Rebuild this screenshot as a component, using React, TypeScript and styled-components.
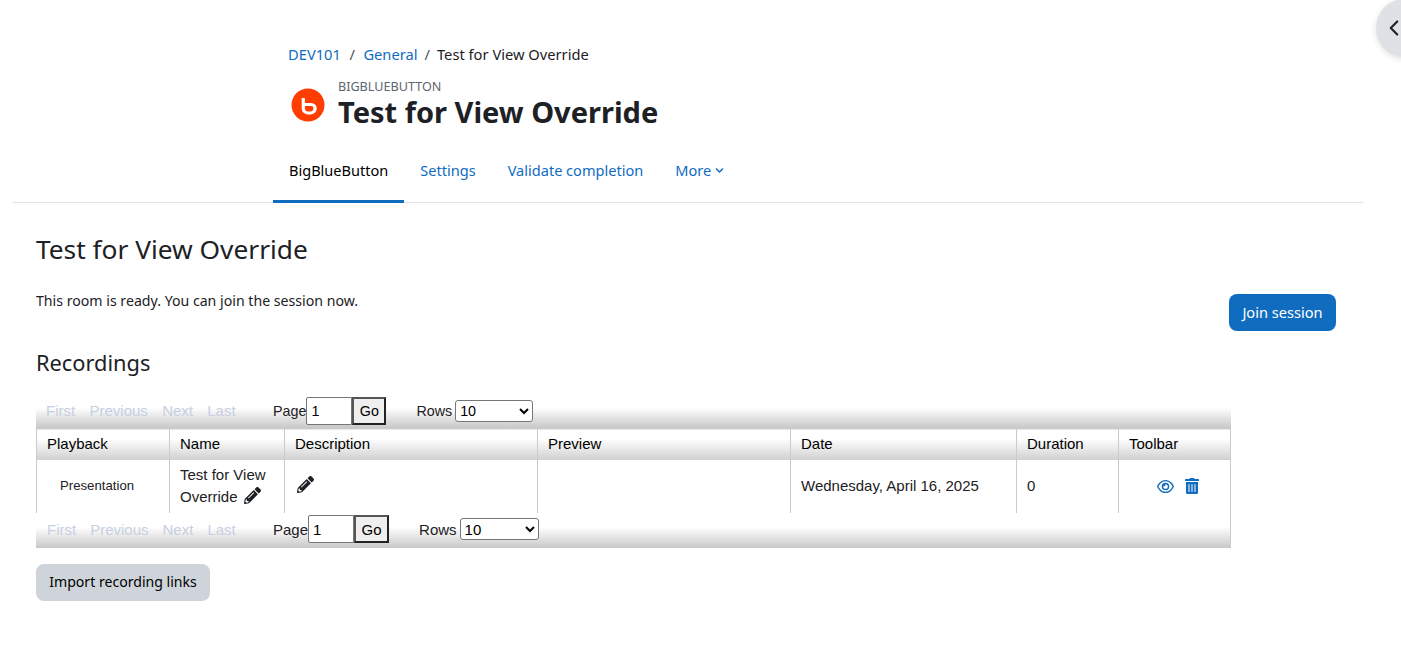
import styled, { createGlobalStyle } from "styled-components";
import { FaPencilAlt, FaTrashAlt, FaChevronDown } from "react-icons/fa";
import { FaRegEye } from "react-icons/fa6";
import { FiChevronLeft } from "react-icons/fi";

const GlobalStyle = createGlobalStyle`
	html, body {
		margin: 0;
		padding: 0;
		background: #fff;
		color: #1d2125;
		font-family: "Noto Sans", sans-serif;
		font-size: 15px;
	}
	a {
		color: #0f6cbf;
		text-decoration: none;
	}
`;

const Page = styled.div`
	position: relative;
	width: 1401px;
	height: 661px;
	overflow: hidden;
	padding-left: 13px;
	box-sizing: border-box;
`;

const DrawerToggle = styled.div`
	position: absolute;
	top: -1px;
	left: 1376px;
	width: 56px;
	height: 58px;
	border-radius: 50%;
	background: #dee2e6;
	box-shadow: 0 2px 6px rgba(0, 0, 0, 0.12);
	display: flex;
	align-items: center;
	padding-left: 5px;
	box-sizing: border-box;
	font-size: 26px;
	color: #1d2125;
`;

const Header = styled.header`
	width: 1350px;
	padding: 43px 0 0 275px;
	box-sizing: border-box;
`;

const Breadcrumb = styled.nav`
	display: flex;
	align-items: center;
	height: 21px;
	font-size: 14.7px;
`;

const Crumb = styled.span`
	white-space: nowrap;
`;

const Slash = styled.span<{ $tight?: boolean }>`
	padding: 0 ${(props) => (props.$tight ? "7px" : "8.5px")};
	color: #495057;
`;

const TitleRow = styled.div`
	display: flex;
	align-items: center;
	margin-top: 16px;
	padding-left: 3px;
	gap: 13px;
`;

const ActivityLabel = styled.div`
	font-size: 12.6px;
	line-height: 14px;
	color: #5c6670;
`;

const PageTitle = styled.h1`
	margin: 0;
	font-size: 29px;
	line-height: 36px;
	font-weight: 700;
	white-space: nowrap;
`;

const Tabs = styled.nav`
	display: flex;
	height: 64px;
	margin-top: 9px;
	margin-left: -15px;
	box-sizing: border-box;
`;

const Tab = styled.a<{ $active?: boolean }>`
	display: flex;
	align-items: center;
	gap: 4px;
	padding: 1px 16px 0;
	font-size: 14.55px;
	white-space: nowrap;
	color: ${(props) => (props.$active ? "#000" : "#0f6cbf")};
	border-bottom: 3px solid ${(props) => (props.$active ? "#0f6cbf" : "transparent")};
`;

const Content = styled.main`
	width: 1350px;
	border-top: 1px solid #dee2e6;
	margin-top: -1px;
	padding: 0 27px 0 23px;
	box-sizing: border-box;
`;

const RoomTitle = styled.h2`
	margin: 30px 0 0;
	font-size: 26.3px;
	line-height: 32px;
	font-weight: 400;
	white-space: nowrap;
`;

const JoinRow = styled.div`
	display: flex;
	justify-content: space-between;
	align-items: flex-start;
	margin-top: 17px;
	font-size: 14.15px;
`;

const RoomStatus = styled.p`
	margin: 8px 0 0;
	line-height: 21px;
`;

const PrimaryButton = styled.button`
	margin-top: 12px;
	width: 107px;
	height: 37px;
	padding: 0 0 2px;
	border: none;
	border-radius: 8px;
	background: #0f6cbf;
	color: #fff;
	font: inherit;
	font-size: 14.6px;
`;

const SectionTitle = styled.h3`
	margin: 16px 0 0;
	font-size: 21.8px;
	line-height: 32px;
	font-weight: 400;
`;

const RecordingsBox = styled.div`
	width: 1195px;
	margin-top: 15px;
	font-family: "Liberation Sans", Arial, sans-serif;
	font-size: 15px;
	border-right: 1px solid #cbcbcb;
	border-left: 1px solid #cbcbcb;
	box-sizing: border-box;
`;

const Paginator = styled.div<{ $bottom?: boolean }>`
	display: flex;
	align-items: center;
	height: ${(props) => (props.$bottom ? "35px" : "34px")};
	padding-bottom: ${(props) => (props.$bottom ? "2px" : "0")};
	margin-left: -1px;
	margin-right: ${(props) => (props.$bottom ? "0" : "-1px")};
	box-sizing: border-box;
	background: linear-gradient(#fff 0%, #fff 40%, #c8c8c8 100%);
	font-size: ${(props) => (props.$bottom ? "15px" : "14.3px")};
`;

const PagerLinks = styled.div<{ $bottom?: boolean }>`
	display: flex;
	gap: ${(props) => (props.$bottom ? "14px" : "14.3px")};
	width: 237px;
	padding-left: ${(props) => (props.$bottom ? "11px" : "10px")};
	padding-bottom: ${(props) => (props.$bottom ? "0" : "2px")};
	box-sizing: border-box;
	font-size: 15px;
	color: #c6d0e2;
`;

const PageField = styled.input`
	width: 46px;
	height: 28px;
	box-sizing: border-box;
	padding: 1px 4px;
	border: 1px solid #767676;
	border-radius: 2px 0 0 2px;
	font: inherit;
	background: #fff;
`;

const GoButton = styled.button<{ $bottom?: boolean }>`
	width: ${(props) => (props.$bottom ? "35px" : "34px")};
	height: 28px;
	padding: 0;
	border: 2px solid;
	border-color: #555 #222 #222 #555;
	background: #efefef;
	font: inherit;
	color: #000;
`;

const RowsSelect = styled.select<{ $bottom?: boolean }>`
	width: ${(props) => (props.$bottom ? "79px" : "78px")};
	height: 22px;
	margin-left: 3px;
	font: inherit;
	background: #fff;
	border-radius: 3px;
	border: 1px solid #767676;
`;

const RowsLabel = styled.span`
	margin-left: 30px;
`;

const Grid = styled.table`
	width: 100%;
	border-collapse: collapse;
	table-layout: fixed;
	border-top: 1px solid #cbcbcb;
`;

const HeadCell = styled.th<{ $width: number }>`
	width: ${(props) => props.$width}px;
	height: 31px;
	padding: 0 10px 2px 10.5px;
	box-sizing: border-box;
	text-align: left;
	font-weight: 400;
	color: #000;
	background: linear-gradient(#fff 0%, #fff 30%, #cfcfcf 100%);
	border-left: 1px solid #cbcbcb;
	&:first-child {
		border-left: none;
		padding-left: 10px;
	}
`;

const Cell = styled.td`
	height: 53px;
	padding: 0 10px 0 10.5px;
	box-sizing: border-box;
	vertical-align: middle;
	border-left: 1px solid #cbcbcb;
	line-height: 22px;
	&:first-child {
		border-left: none;
	}
`;

const PlaybackCell = styled(Cell)`
	padding-left: 23px;
	font-size: 13.2px;
`;

const ToolbarIcons = styled.div`
	display: flex;
	justify-content: center;
	align-items: center;
	gap: 10px;
	color: #0f6cbf;
	padding-left: 7.5px;
`;

const EyeIcon = styled(FaRegEye)`
	font-size: 17px;
`;

const TrashIcon = styled(FaTrashAlt)`
	font-size: 16px;
`;

const EditIcon = styled.span`
	display: inline-flex;
	vertical-align: -2px;
	margin-left: 2px;
	font-size: 17px;
`;

const SecondaryButton = styled.button`
	display: block;
	width: 174px;
	height: 37px;
	margin-top: 16px;
	padding: 0 0 2px;
	border: none;
	border-radius: 8px;
	background: #ced4da;
	color: #000;
	font-family: "Noto Sans", sans-serif;
	font-size: 14.1px;
`;

function BbbLogo() {
	return (
		<svg width="34" height="34" viewBox="0 0 34 34">
			<circle cx="17" cy="17" r="16.5" fill="#ff3d00" />
			<path
				d="M12.3 10V20.5a4.5 4.5 0 0 0 4.5 4.5h2.8a4.5 4.5 0 0 0 4.5 -4.5a4 4 0 0 0 -4 -4h-7.8"
				fill="none"
				stroke="#fff"
				strokeWidth="3.2"
			/>
		</svg>
	);
}

function Pager({ bottom }: { bottom?: boolean }) {
	return (
		<Paginator $bottom={bottom}>
			<PagerLinks $bottom={bottom}>
				<span>First</span>
				<span>Previous</span>
				<span>Next</span>
				<span>Last</span>
			</PagerLinks>
			<span>Page</span>
			<PageField defaultValue="1" />
			<GoButton $bottom={bottom}>Go</GoButton>
			<RowsLabel>Rows</RowsLabel>
			<RowsSelect $bottom={bottom} defaultValue="10">
				<option>10</option>
			</RowsSelect>
		</Paginator>
	);
}

export default function App() {
	const columns = [
		{ title: "Playback", width: 132 },
		{ title: "Name", width: 115 },
		{ title: "Description", width: 253 },
		{ title: "Preview", width: 253 },
		{ title: "Date", width: 226 },
		{ title: "Duration", width: 102 },
		{ title: "Toolbar", width: 112 },
	];
	return (
		<>
			<GlobalStyle />
			<Page>
				<DrawerToggle>
					<FiChevronLeft />
				</DrawerToggle>
				<Header>
					<Breadcrumb>
						<Crumb>
							<a href="#">DEV101</a>
						</Crumb>
						<Slash>/</Slash>
						<Crumb>
							<a href="#">General</a>
						</Crumb>
						<Slash $tight>/</Slash>
						<Crumb>Test for View Override</Crumb>
					</Breadcrumb>
					<TitleRow>
						<BbbLogo />
						<div>
							<ActivityLabel>BIGBLUEBUTTON</ActivityLabel>
							<PageTitle>Test for View Override</PageTitle>
						</div>
					</TitleRow>
					<Tabs>
						<Tab $active>BigBlueButton</Tab>
						<Tab>Settings</Tab>
						<Tab>Validate completion</Tab>
						<Tab>
							More <FaChevronDown size={9} />
						</Tab>
					</Tabs>
				</Header>
				<Content>
					<RoomTitle>Test for View Override</RoomTitle>
					<JoinRow>
						<RoomStatus>This room is ready. You can join the session now.</RoomStatus>
						<PrimaryButton>Join session</PrimaryButton>
					</JoinRow>
					<SectionTitle>Recordings</SectionTitle>
					<RecordingsBox>
						<Pager />
						<Grid>
							<thead>
								<tr>
									{columns.map((column) => (
										<HeadCell key={column.title} $width={column.width}>
											{column.title}
										</HeadCell>
									))}
								</tr>
							</thead>
							<tbody>
								<tr>
									<PlaybackCell>Presentation</PlaybackCell>
									<Cell>
										Test for View Override{" "}
										<EditIcon>
											<FaPencilAlt />
										</EditIcon>
									</Cell>
									<Cell>
										<EditIcon>
											<FaPencilAlt />
										</EditIcon>
									</Cell>
									<Cell />
									<Cell>Wednesday, April 16, 2025</Cell>
									<Cell>0</Cell>
									<Cell>
										<ToolbarIcons>
											<EyeIcon />
											<TrashIcon />
										</ToolbarIcons>
									</Cell>
								</tr>
							</tbody>
						</Grid>
						<Pager bottom />
					</RecordingsBox>
					<SecondaryButton>Import recording links</SecondaryButton>
				</Content>
			</Page>
		</>
	);
}
